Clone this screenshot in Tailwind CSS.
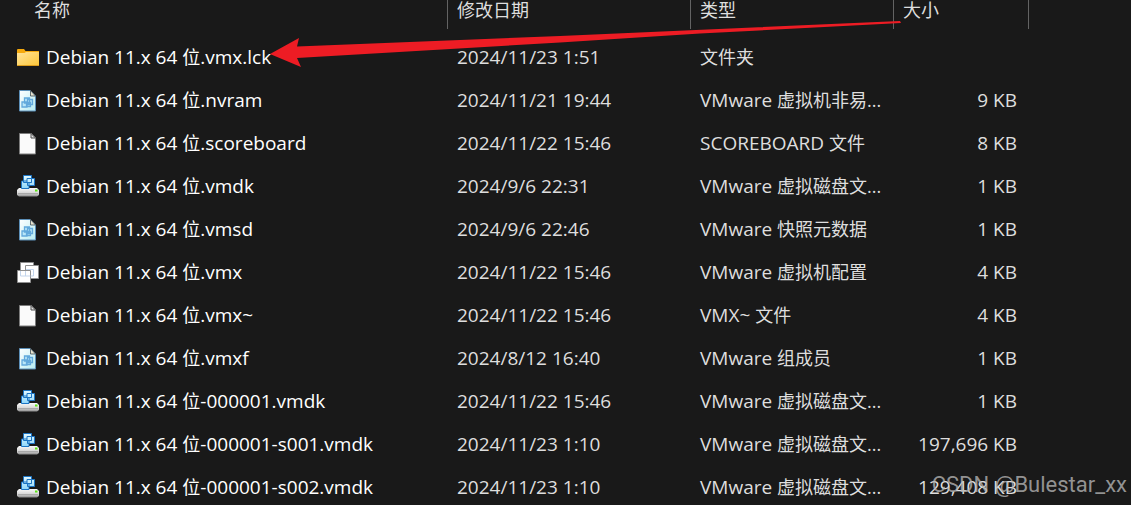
<!DOCTYPE html>
<html lang="zh-CN">
<head>
  <meta charset="UTF-8" />
  <meta name="viewport" content="width=device-width, initial-scale=1.0"/>
  <title>Debian 11.x 64 位</title>
  <script src="https://cdn.jsdelivr.net/npm/@tailwindcss/browser@4"></script>
</head>
<body class="bg-[#191919] text-[#dedede] font-['Open_Sans','Noto_Sans_CJK_SC',sans-serif] text-[19px]">
  <!-- Icon definitions -->
  <svg class="absolute size-0">
    <defs>
      <linearGradient id="gFolder" x1="0" y1="0" x2="1" y2="1"><stop offset="0" stop-color="#ffe39a"/><stop offset="1" stop-color="#fdc738"/></linearGradient>
      <linearGradient id="gPage" x1="0" y1="0" x2="1" y2="1"><stop offset="0" stop-color="#ffffff"/><stop offset="1" stop-color="#b5ecf2"/></linearGradient>
      <linearGradient id="gDisk" x1="0" y1="0" x2="0" y2="1"><stop offset="0" stop-color="#fafafa"/><stop offset="0.6" stop-color="#d5d5d5"/><stop offset="1" stop-color="#8c8c8c"/></linearGradient>
      <linearGradient id="gBox" x1="0" y1="0" x2="0" y2="1"><stop offset="0" stop-color="#e2f8ff"/><stop offset="1" stop-color="#8fd7fa"/></linearGradient>
    </defs>
    <symbol id="folder" viewBox="0 0 24 24">
      <path d="M1 4a1 1 0 0 1 1-1h6l1.500 2H23v4H1z" fill="#f5a90d"/>
      <path d="M1 7h7.500l1.500-1H23V19a1 1 0 0 1-1 1H2a1 1 0 0 1-1-1z" fill="url(#gFolder)"/>
      <path d="M1 19h22a1 1 0 0 1-1 1H2a1 1 0 0 1-1-1z" fill="#dc9c1c"/>
    </symbol>
    <symbol id="config" viewBox="0 0 24 24">
      <path d="M3.500 1.500h11l5 5.500v15h-16z" fill="url(#gPage)" stroke="#5c8fb8"/>
      <path d="M14.500 1.500v5.500h5z" fill="#e9e4cf" stroke="#3e4a52" stroke-width="0.800"/>
      <g fill="#b8e6f8" stroke="#62a9dc" stroke-width="1.300">
        <path d="M8.500 9h5v5h-5zM11.500 10.500h5v5h-5zM6 13h5v5H6zM10.500 13.500h4v4h-4z"/>
      </g>
    </symbol>
    <symbol id="file" viewBox="0 0 24 24">
      <path d="M3.500 1.500h12l4 4v16.500h-16z" fill="#fafafa" stroke="#7c7c7c"/>
      <path d="M15 1.500v4.500h4.500z" fill="#e4e4e4" stroke="#4d4d4d"/>
    </symbol>
    <symbol id="disk" viewBox="0 0 24 24">
      <path d="M3 13h18l2 2v5l-2 1.500H3l-2-1.500v-5z" fill="url(#gDisk)"/>
      <path d="M2 18.500h20" stroke="#a8a8a8"/>
      <path d="M19 14.500h2.500v2H19z" fill="#5ae613"/>
      <g fill="url(#gBox)" stroke="#1c75c4">
        <path d="M7.500 .5h8v7h-8zM11.500 3.500h7v7h-7zM5.500 6h7.500v7.500H5.500z"/>
        <path d="M11 3.500h4.500v4H11z" fill="#c9effd"/>
      </g>
    </symbol>
    <symbol id="machine" viewBox="0 0 24 24">
      <g fill="#ffffff" stroke="#8f8f8f">
        <path d="M4.500 1.500h13v13h-13z"/>
        <path d="M9.500 4.500h13v13h-13z"/>
        <path d="M1.500 9.500h13v12h-13z"/>
      </g>
      <path d="M4.500 10v5h10M9.500 10v5M10 8.500h7.500v6.500H15" fill="none" stroke="#c3d5ec"/>
    </symbol>
  </svg>

  <main class="relative h-screen overflow-hidden">
    <table class="w-full table-fixed border-collapse whitespace-nowrap text-left">
      <colgroup>
        <col class="w-[448px]" />
        <col class="w-[243px]" />
        <col class="w-[203px]" />
        <col class="w-[135px]" />
        <col />
      </colgroup>
      <thead class="text-[18px] leading-5">
        <tr class="h-9 align-top">
          <th class="p-0 font-normal"><div class="h-[29px] border-r border-[#636363] pl-[34px]">名称</div></th>
          <th class="p-0 font-normal"><div class="h-[29px] border-r border-[#636363] pl-[9px]">修改日期</div></th>
          <th class="p-0 font-normal"><div class="h-[29px] border-r border-[#636363] pl-[9px]">类型</div></th>
          <th class="p-0 font-normal"><div class="h-[29px] border-r border-[#636363] pl-[9px]">大小</div></th>
          <td></td>
        </tr>
      </thead>
      <tbody>
        <tr class="h-[43px]">
          <td class="p-0 pl-4 text-white"><div class="flex items-center gap-[6px]"><svg class="size-6"><use href="#folder"/></svg><span>Debian 11.x 64 <span class="text-[18px]">位</span>.vmx.lck</span></div></td>
          <td class="p-0 pl-[9px]">2024/11/23 1:51</td>
          <td class="p-0 pl-[9px]"><span class="text-[18px]">文件夹</span></td>
          <td class="p-0 pr-3 text-right"></td>
        </tr>
        <tr class="h-[43px]">
          <td class="p-0 pl-4 text-white"><div class="flex items-center gap-[6px]"><svg class="size-6"><use href="#config"/></svg><span>Debian 11.x 64 <span class="text-[18px]">位</span>.nvram</span></div></td>
          <td class="p-0 pl-[9px]">2024/11/21 19:44</td>
          <td class="p-0 pl-[9px]">VMware <span class="text-[18px]">虚拟机非易...</span></td>
          <td class="p-0 pr-3 text-right">9 KB</td>
        </tr>
        <tr class="h-[43px]">
          <td class="p-0 pl-4 text-white"><div class="flex items-center gap-[6px]"><svg class="size-6"><use href="#file"/></svg><span>Debian 11.x 64 <span class="text-[18px]">位</span>.scoreboard</span></div></td>
          <td class="p-0 pl-[9px]">2024/11/22 15:46</td>
          <td class="p-0 pl-[9px]">SCOREBOARD <span class="text-[18px]">文件</span></td>
          <td class="p-0 pr-3 text-right">8 KB</td>
        </tr>
        <tr class="h-[43px]">
          <td class="p-0 pl-4 text-white"><div class="flex items-center gap-[6px]"><svg class="size-6"><use href="#disk"/></svg><span>Debian 11.x 64 <span class="text-[18px]">位</span>.vmdk</span></div></td>
          <td class="p-0 pl-[9px]">2024/9/6 22:31</td>
          <td class="p-0 pl-[9px]">VMware <span class="text-[18px]">虚拟磁盘文...</span></td>
          <td class="p-0 pr-3 text-right">1 KB</td>
        </tr>
        <tr class="h-[43px]">
          <td class="p-0 pl-4 text-white"><div class="flex items-center gap-[6px]"><svg class="size-6"><use href="#config"/></svg><span>Debian 11.x 64 <span class="text-[18px]">位</span>.vmsd</span></div></td>
          <td class="p-0 pl-[9px]">2024/9/6 22:46</td>
          <td class="p-0 pl-[9px]">VMware <span class="text-[18px]">快照元数据</span></td>
          <td class="p-0 pr-3 text-right">1 KB</td>
        </tr>
        <tr class="h-[43px]">
          <td class="p-0 pl-4 text-white"><div class="flex items-center gap-[6px]"><svg class="size-6"><use href="#machine"/></svg><span>Debian 11.x 64 <span class="text-[18px]">位</span>.vmx</span></div></td>
          <td class="p-0 pl-[9px]">2024/11/22 15:46</td>
          <td class="p-0 pl-[9px]">VMware <span class="text-[18px]">虚拟机配置</span></td>
          <td class="p-0 pr-3 text-right">4 KB</td>
        </tr>
        <tr class="h-[43px]">
          <td class="p-0 pl-4 text-white"><div class="flex items-center gap-[6px]"><svg class="size-6"><use href="#file"/></svg><span>Debian 11.x 64 <span class="text-[18px]">位</span>.vmx~</span></div></td>
          <td class="p-0 pl-[9px]">2024/11/22 15:46</td>
          <td class="p-0 pl-[9px]">VMX~ <span class="text-[18px]">文件</span></td>
          <td class="p-0 pr-3 text-right">4 KB</td>
        </tr>
        <tr class="h-[43px]">
          <td class="p-0 pl-4 text-white"><div class="flex items-center gap-[6px]"><svg class="size-6"><use href="#config"/></svg><span>Debian 11.x 64 <span class="text-[18px]">位</span>.vmxf</span></div></td>
          <td class="p-0 pl-[9px]">2024/8/12 16:40</td>
          <td class="p-0 pl-[9px]">VMware <span class="text-[18px]">组成员</span></td>
          <td class="p-0 pr-3 text-right">1 KB</td>
        </tr>
        <tr class="h-[43px]">
          <td class="p-0 pl-4 text-white"><div class="flex items-center gap-[6px]"><svg class="size-6"><use href="#disk"/></svg><span>Debian 11.x 64 <span class="text-[18px]">位</span>-000001.vmdk</span></div></td>
          <td class="p-0 pl-[9px]">2024/11/22 15:46</td>
          <td class="p-0 pl-[9px]">VMware <span class="text-[18px]">虚拟磁盘文...</span></td>
          <td class="p-0 pr-3 text-right">1 KB</td>
        </tr>
        <tr class="h-[43px]">
          <td class="p-0 pl-4 text-white"><div class="flex items-center gap-[6px]"><svg class="size-6"><use href="#disk"/></svg><span>Debian 11.x 64 <span class="text-[18px]">位</span>-000001-s001.vmdk</span></div></td>
          <td class="p-0 pl-[9px]">2024/11/23 1:10</td>
          <td class="p-0 pl-[9px]">VMware <span class="text-[18px]">虚拟磁盘文...</span></td>
          <td class="p-0 pr-3 text-right">197,696 KB</td>
        </tr>
        <tr class="h-[43px]">
          <td class="p-0 pl-4 text-white"><div class="flex items-center gap-[6px]"><svg class="size-6"><use href="#disk"/></svg><span>Debian 11.x 64 <span class="text-[18px]">位</span>-000001-s002.vmdk</span></div></td>
          <td class="p-0 pl-[9px]">2024/11/23 1:10</td>
          <td class="p-0 pl-[9px]">VMware <span class="text-[18px]">虚拟磁盘文...</span></td>
          <td class="p-0 pr-3 text-right">129,408 KB</td>
        </tr>
      </tbody>
    </table>

    <!-- Arrow pointing at the lock folder -->
    <svg class="absolute left-[270px] top-5 pointer-events-none" width="632" height="50" viewBox="270 20 632 50">
      <path d="M270 54 299 38 297 46.500 560 36 900 21 901 23 700 33.500 560 42.500 297 58 301 67z" fill="#ed1c24"/>
    </svg>

    <!-- Watermark -->
    <div class="absolute right-1 bottom-1 text-[22px] leading-8 text-[#b4b4b4]/80 font-['Roboto','Liberation_Sans',sans-serif]">CSDN @Bulestar_xx</div>
  </main>
</body>
</html>
